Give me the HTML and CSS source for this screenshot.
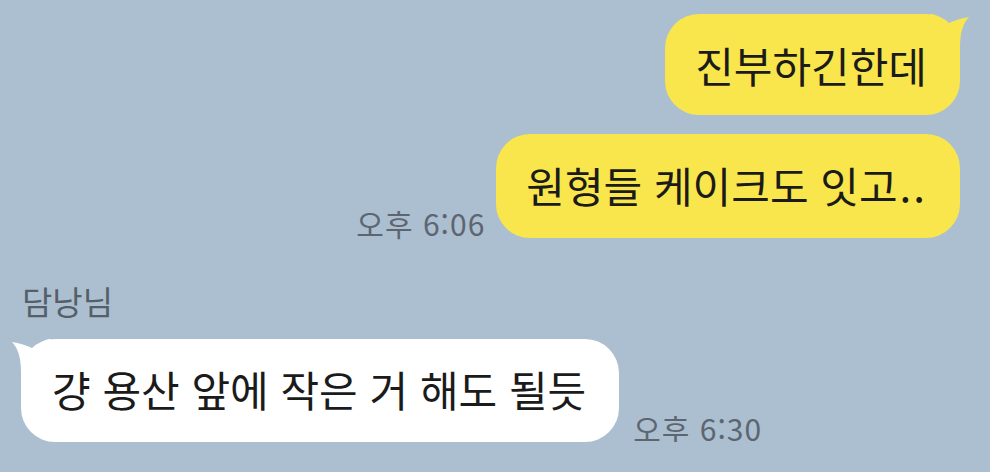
FILE: index.html
```html
<!DOCTYPE html>
<html lang="ko">
<head>
  <meta charset="UTF-8">
  <meta name="viewport" content="width=device-width, initial-scale=1.0">
  <title>채팅</title>
  <link rel="stylesheet" href="styles.css">
</head>
<body>

  <div class="chat">

    <div class="row mine first">
      <div class="bubble yellow">
        진부하긴한데
        <svg class="tail tail-right" width="40" height="40" viewBox="0 0 40 40">
          <path d="M0 0 C8 0 12 5 15 11 Q26 5 39 3 Q30 12 30 33 L30 40 L0 40 Z" />
        </svg>
      </div>
    </div>

    <div class="row mine">
      <span class="time">오후 6:06</span>
      <div class="bubble yellow">원형들 케이크도 잇고<span class="dots">..</span></div>
    </div>

    <div class="name">담낭님</div>

    <div class="row theirs">
      <div class="bubble white">
        걍 용산 앞에 작은 거 해도 될듯
        <svg class="tail tail-left" width="40" height="40" viewBox="0 0 40 40">
          <path d="M40 0 C32 0 28 5 25 11 Q14 5 1 3 Q10 12 10 33 L10 40 L40 40 Z" />
        </svg>
      </div>
      <span class="time">오후 6:30</span>
    </div>

  </div>

</body>
</html>
```

FILE: styles.css
```css
/* chat room */
body {
  margin: 0;
  background-color: #abbfd0;
  font-family: "Noto Sans CJK KR", "Noto Sans", sans-serif;
  overflow: hidden;
}

.chat {
  display: flex;
  flex-direction: column;
  padding: 14px 30px 0 21px;
}

.row {
  display: flex;
  align-items: flex-end;
  gap: 14px;
}

.mine {
  justify-content: flex-end;
  margin-top: 19px;
}

.mine.first {
  margin-top: 0;
}

.theirs {
  justify-content: flex-start;
  margin-top: 19px;
}

.bubble {
  position: relative;
  font-size: 42px;
  line-height: 45px;
  color: #1b1b1b;
  padding: 28px 33px 31px 30px;
  border-radius: 34px;
  white-space: nowrap;
}

.first .bubble {
  padding-top: 28px;
  padding-bottom: 28px;
}

.dots {
  letter-spacing: 2px;
  margin-left: 2px;
}

.yellow {
  background-color: #f9e64c;
}

.white {
  background-color: #ffffff;
  padding: 27px 33px 31px 31px;
}

.tail {
  position: absolute;
  top: 0;
}

.yellow .tail path {
  fill: #f9e64c;
}

.white .tail path {
  fill: #ffffff;
}

.tail-right {
  right: -10px;
}

.tail-left {
  left: -10px;
}

.time {
  font-size: 30px;
  line-height: 34px;
  letter-spacing: 1px;
  color: #5d6670;
  white-space: nowrap;
  margin-bottom: -2px;
  margin-right: -3px;
}

.theirs .time {
  margin-bottom: -3px;
  margin-right: 0;
}

.name {
  margin-top: 44px;
  font-size: 33px;
  line-height: 38px;
  color: #565f68;
  padding-left: 1px;
}
```
